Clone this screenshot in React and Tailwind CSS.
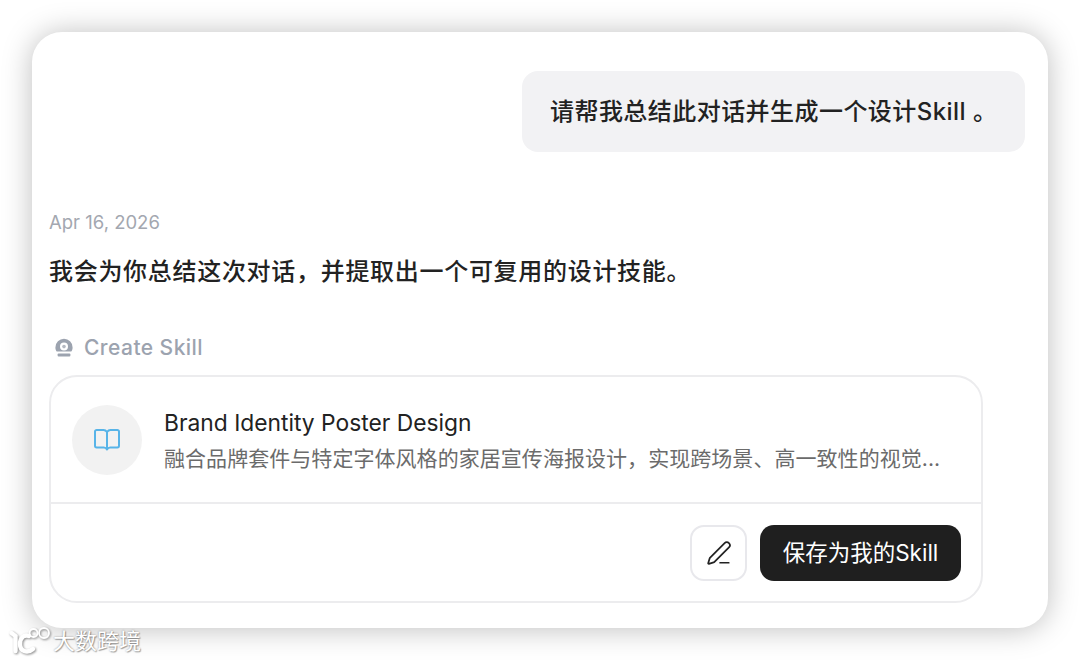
import React from 'react';
import { PenLine } from 'lucide-react';

const sansStack = "font-['Inter','Noto_Sans_CJK_SC',sans-serif]";

// dome with a dot on a small base
const SkillIcon = () => (
  <svg width="20" height="20" viewBox="0 0 20 20" fill="none">
    <path d="M1.4 9.4a8.6 8.6 0 1 1 17.2 0c0 1.6-.5 2.9-1.3 4.1H2.7c-.8-1.2-1.3-2.5-1.3-4.1z" fill="#9ca3af" />
    <circle cx="10" cy="8.6" r="4" fill="#fff" />
    <circle cx="10" cy="8.6" r="1.8" fill="#b4b9c2" />
    <rect x="3.6" y="15.4" width="12.8" height="3.2" rx="1" fill="#9ca3af" />
  </svg>
);

const BookIcon = () => (
  <svg width="28" height="24" viewBox="0 0 28 24" fill="none" stroke="#58b4e8" strokeWidth="2" strokeLinejoin="round" strokeLinecap="round">
    <path d="M14 4c-.9-1.2-2-2-3.4-2H3.6A1.6 1.6 0 0 0 2 3.6v14.2c0 1 .7 1.7 1.6 1.7h7.2c1.4 0 2.4.6 3.2 2 .8-1.4 1.8-2 3.2-2h7.2c.9 0 1.6-.7 1.6-1.7V3.6c0-1-.7-1.6-1.6-1.6h-7c-1.4 0-2.5.8-3.4 2z" />
    <path d="M14 4v17" />
  </svg>
);

const Watermark = () => (
  <div className="absolute left-[9px] top-[622px] flex items-center gap-[2px] text-white [text-shadow:1px_1px_1px_rgba(0,0,0,0.3),0_0_2px_rgba(0,0,0,0.4)]">
    <svg width="42" height="34" viewBox="0 -2 42 34" fill="none" stroke="#fff" strokeLinecap="round" className="drop-shadow-[1px_1px_1px_rgba(0,0,0,0.45)]">
      <path d="M2.5 9l4 3v15" strokeWidth="4.4" />
      <path d="M20 12c-5-2-9 2-9 8 0 7 7 10 13 5" strokeWidth="4.4" />
      <circle cx="24.5" cy="9" r="4" strokeWidth="1.8" />
      <circle cx="35" cy="9" r="5" strokeWidth="1.8" />
    </svg>
    <span className="text-[22px] leading-[34px] font-['Noto_Sans_CJK_SC',sans-serif]">大数跨境</span>
  </div>
);

export default function App() {
  return (
    <div className={`relative w-[1080px] h-[660px] overflow-hidden bg-white pt-[32px] pl-[32px] ${sansStack}`}>
      <div className="w-[1016px] h-[596px] bg-white rounded-[30px] shadow-[0_1px_30px_rgba(0,0,0,0.26)] pt-[39px] pl-[17px] pr-[23px]">
        <div className="flex justify-end">
          <div className="w-[503px] h-[81px] pl-[28px] flex items-center rounded-[16px] bg-[#f2f2f4] text-[24px] tracking-[0.45px] font-medium text-[#222222] whitespace-nowrap">
            请帮我总结此对话并生成一个设计Skill 。
          </div>
        </div>

        <div className="mt-[56px] text-[18.5px] leading-[28px] text-[#a3a7b0]">Apr 16, 2026</div>
        <div className="mt-[19px] text-[24px] tracking-[0.7px] leading-[34px] font-medium text-[#222222]">
          我会为你总结这次对话，并提取出一个可复用的设计技能。
        </div>

        <div className="mt-[45px] flex items-center gap-[10px] pl-[5px] h-[28px]">
          <SkillIcon />
          <span className="text-[21px] font-medium text-[#9ca3af] tracking-[0.45px]">Create Skill</span>
        </div>

        <div className="mt-[13px] w-[934px] h-[228px] rounded-[28px] border-2 border-[#ececee] bg-white flex flex-col">
          <div className="h-[127px] flex items-center gap-[22px] pl-[21px] border-b-2 border-[#ececee]">
            <div className="w-[70px] h-[70px] rounded-full bg-[#f2f2f2] flex items-center justify-center">
              <BookIcon />
            </div>
            <div className="flex flex-col gap-[4px] pt-[2px]">
              <div className="text-[22.8px] leading-[32px] text-[#222222]">Brand Identity Poster Design</div>
              <div className="text-[21px] tracking-[0.05px] leading-[32px] text-[#6b6b6b] whitespace-nowrap">
                融合品牌套件与特定字体风格的家居宣传海报设计，实现跨场景、高一致性的视觉...
              </div>
            </div>
          </div>
          <div className="flex-1 flex items-center justify-end gap-[13px] pr-[20px]">
            <button className="w-[57px] h-[56px] rounded-[14px] border-2 border-[#e8e8ec] bg-white flex items-center justify-center text-[#222222]">
              <PenLine size={26} strokeWidth={1.6} />
            </button>
            <button className="w-[201px] h-[56px] rounded-[14px] bg-[#1f1f1f] text-white text-[22.5px]">保存为我的Skill</button>
          </div>
        </div>
      </div>
      <Watermark />
    </div>
  );
}
